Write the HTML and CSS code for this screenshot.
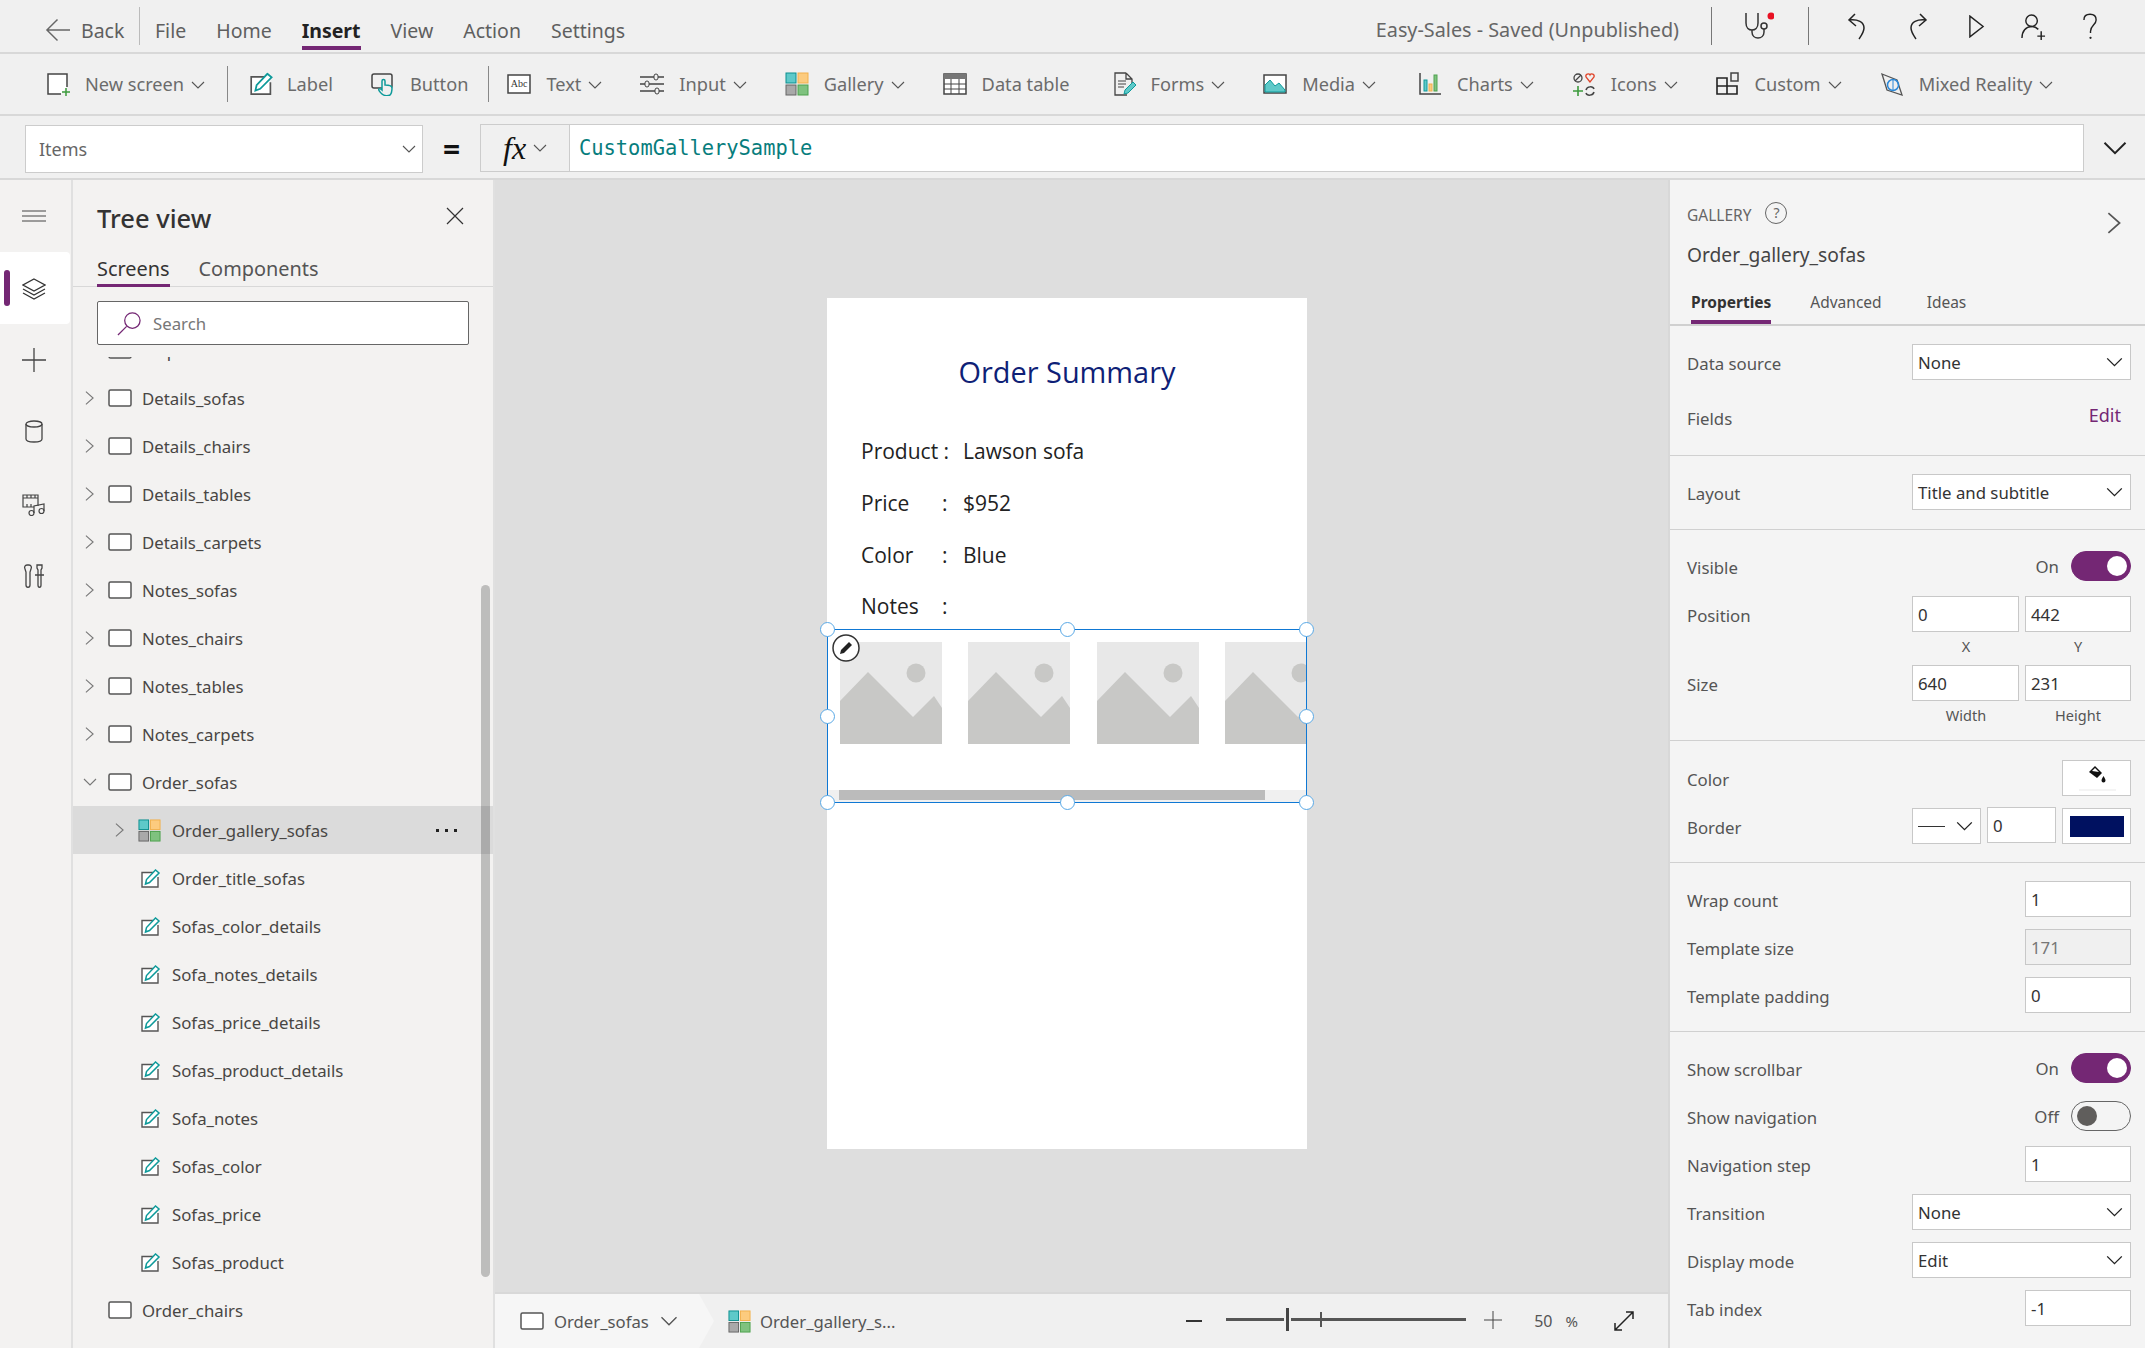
FILE: index.html
```html
<!DOCTYPE html>
<html>

<head>
    <title>Easy-Sales - Power Apps Studio</title>
    <link rel="stylesheet" href="styles.css">
</head>

<body>
    <svg class="defs" width="0" height="0">
        <defs>
            <symbol id="i-gallery" viewBox="0 0 24 24">
                <rect x="1" y="1" width="10" height="10" fill="#5ec9c9" stroke="#0d8f8f" />
                <rect x="13" y="1" width="10" height="10" fill="#fccb7e" stroke="#f2b04c" />
                <rect x="1" y="13" width="10" height="10" fill="#a9a9a9" stroke="#666" />
                <rect x="13" y="13" width="10" height="10" fill="#7fc27f" stroke="#4ea24e" />
            </symbol>
            <symbol id="i-screen" viewBox="0 0 24 18">
                <rect x="1" y="1" width="22" height="16" rx="1.5" fill="#fff" stroke="#555" stroke-width="1.5" />
            </symbol>
            <symbol id="i-label" viewBox="0 0 20 19">
                <path d="M12 3.500H1v14.500h16V8" fill="#fff" stroke="#555" stroke-width="1.400" />
                <path d="M4.500 15l1-4.500 9-9.500 3.500 3-9.500 9.500z" fill="#fff" stroke="#0e9a9a" stroke-width="1.500" />
            </symbol>
            <symbol id="i-chev" viewBox="0 0 14 8">
                <path d="M1 1l6 6 6-6" fill="none" stroke="currentColor" stroke-width="1.100" />
            </symbol>
            <symbol id="i-chev-right" viewBox="0 0 10 16">
                <path d="M1 1l8 7-8 7" fill="none" stroke="currentColor" stroke-width="1.200" />
            </symbol>
            <symbol id="i-image" viewBox="0 0 102 102">
                <rect width="102" height="102" fill="#e8e8e8" />
                <circle cx="76" cy="31" r="9.500" fill="#c8c8c6" />
                <path d="M0 59L28 30l45 45 21-21 8 12v36H0z" fill="#c8c8c6" />
            </symbol>
        </defs>
    </svg>

    <div class="app">
        <header class="menubar">
            <a class="back">
                <svg class="back-icon" viewBox="0 0 26 24">
                    <path d="M13 1L2 12l11 11M2 12h24" fill="none" stroke="#666" stroke-width="1.500" />
                </svg>
                Back
            </a>
            <span class="menu-sep"></span>
            <nav class="menu">
                <a>File</a>
                <a>Home</a>
                <a class="active">Insert</a>
                <a>View</a>
                <a>Action</a>
                <a>Settings</a>
            </nav>
            <span class="app-name">Easy-Sales - Saved (Unpublished)</span>
            <span class="tool-sep first"></span>
            <svg class="tool stetho" viewBox="0 0 30 30">
                <path d="M2 2v10c0 5 3 7 6 7s6-2 6-7V2M8 19v2c0 4 3 6 6 6s6-2 6-6v-3" fill="none" stroke="#333" stroke-width="1.500" />
                <circle cx="20" cy="15" r="3" fill="none" stroke="#333" stroke-width="1.500" />
                <circle cx="27" cy="5" r="3.500" fill="#e81123" />
            </svg>
            <span class="tool-sep"></span>
            <svg class="tool undo" viewBox="0 0 22 27">
                <path d="M9 1L3 7l7 6M3 7c9-1 15 2 15 8 0 4-3 8-5 11" fill="none" stroke="#222" stroke-width="1.500" />
            </svg>
            <svg class="tool redo" viewBox="0 0 22 27">
                <path d="M13 1l6 6-7 6M19 7C10 6 4 9 4 15c0 4 3 8 5 11" fill="none" stroke="#222" stroke-width="1.500" />
            </svg>
            <svg class="tool play" viewBox="0 0 18 24">
                <path d="M2 1l14 11L2 23z" fill="none" stroke="#222" stroke-width="1.500" />
            </svg>
            <svg class="tool person" viewBox="0 0 26 28">
                <circle cx="11" cy="8" r="6" fill="none" stroke="#222" stroke-width="1.500" />
                <path d="M1 26c0-7 4-12 10-12 3 0 5 1 7 3M21 19v9M17 24h8" fill="none" stroke="#222" stroke-width="1.500" />
            </svg>
            <svg class="tool help" viewBox="0 0 16 28">
                <path d="M1 7c0-4 3-6 6.500-6S14 3 14 7c0 5-6 6-6 12v2" fill="none" stroke="#222" stroke-width="1.500" />
                <circle cx="8" cy="26" r="1.200" fill="#222" />
            </svg>
        </header>

        <div class="toolbar">
            <div class="tb-item">
                <svg class="tb-icon" viewBox="0 0 24 24">
                    <path d="M15 22H2V2h19v13" fill="#fff" stroke="#444" stroke-width="1.500" />
                    <path d="M20 16v8M16 20h8" stroke="#3d9b3d" stroke-width="1.500" />
                </svg>
                <span>New screen</span>
                <svg class="chev"><use href="#i-chev" /></svg>
            </div>
            <span class="tb-sep"></span>
            <div class="tb-item label-item">
                <svg class="tb-icon" viewBox="0 0 20 19"><use href="#i-label" /></svg>
                <span>Label</span>
            </div>
            <div class="tb-item">
                <svg class="tb-icon" viewBox="0 0 24 24">
                    <rect x="1" y="2" width="20" height="14" rx="2" fill="none" stroke="#444" stroke-width="1.500" />
                    <path d="M11 22c-2-2-4-4-3-5 1-1 2 0 3 1V9c0-2 3-2 3 0v4c3 0 7 0 7 3 0 3 0 5-2 7-2 1-6 1-8-1z" fill="#f0f0f0" stroke="#0e9a9a" stroke-width="1.500" />
                </svg>
                <span>Button</span>
            </div>
            <span class="tb-sep tight"></span>
            <div class="tb-item">
                <svg class="tb-icon" viewBox="0 0 24 24">
                    <rect x="1" y="3" width="22" height="18" fill="#fff" stroke="#444" stroke-width="1.500" />
                    <text x="12" y="15" text-anchor="middle" class="abc">Abc</text>
                </svg>
                <span>Text</span>
                <svg class="chev"><use href="#i-chev" /></svg>
            </div>
            <div class="tb-item">
                <svg class="tb-icon" viewBox="0 0 24 24">
                    <path d="M0 5h24M0 12h24M0 19h24" stroke="#444" stroke-width="1.300" />
                    <rect x="14" y="2" width="4" height="6" rx="2" fill="#f0f0f0" stroke="#444" />
                    <rect x="5" y="9" width="4" height="6" rx="2" fill="#f0f0f0" stroke="#444" />
                    <rect x="15" y="16" width="4" height="6" rx="2" fill="#f0f0f0" stroke="#444" />
                </svg>
                <span>Input</span>
                <svg class="chev"><use href="#i-chev" /></svg>
            </div>
            <div class="tb-item">
                <svg class="tb-icon"><use href="#i-gallery" /></svg>
                <span>Gallery</span>
                <svg class="chev"><use href="#i-chev" /></svg>
            </div>
            <div class="tb-item">
                <svg class="tb-icon" viewBox="0 0 24 24">
                    <rect x="1" y="2" width="22" height="20" fill="#fff" stroke="#444" stroke-width="1.500" />
                    <rect x="1" y="2" width="22" height="5" fill="#777" />
                    <path d="M1 12h22M1 17h22M8 7v15M16 7v15" stroke="#444" />
                </svg>
                <span>Data table</span>
            </div>
            <div class="tb-item pushed">
                <svg class="tb-icon" viewBox="0 0 24 24">
                    <path d="M14 1H3v22h12M14 1l6 6v5M14 1v6h6" fill="none" stroke="#444" stroke-width="1.300" />
                    <path d="M6 9h8M6 12h8M6 15h6" stroke="#444" />
                    <path d="M12 22l1-4 8-8 3 3-8 8z" fill="#5ec9c9" stroke="#0e9a9a" />
                </svg>
                <span>Forms</span>
                <svg class="chev"><use href="#i-chev" /></svg>
            </div>
            <div class="tb-item">
                <svg class="tb-icon" viewBox="0 0 24 24">
                    <rect x="1" y="3" width="22" height="18" fill="#fff" stroke="#444" stroke-width="1.500" />
                    <path d="M2 20v-7l5-5 5 6 4-3 6 7v2z" fill="#5ec9c9" stroke="#0e9a9a" />
                </svg>
                <span>Media</span>
                <svg class="chev"><use href="#i-chev" /></svg>
            </div>
            <div class="tb-item pushed">
                <svg class="tb-icon" viewBox="0 0 24 24">
                    <path d="M2 1v21h21" fill="none" stroke="#444" stroke-width="1.500" />
                    <rect x="6" y="8" width="3" height="11" fill="#5ec9c9" stroke="#0e9a9a" />
                    <rect x="11" y="12" width="3" height="7" fill="#fccb7e" stroke="#f2b04c" />
                    <rect x="16" y="3" width="3" height="16" fill="#7fc27f" stroke="#4ea24e" />
                </svg>
                <span>Charts</span>
                <svg class="chev"><use href="#i-chev" /></svg>
            </div>
            <div class="tb-item">
                <svg class="tb-icon" viewBox="0 0 24 24">
                    <circle cx="6" cy="6" r="4" fill="none" stroke="#444" stroke-width="1.300" />
                    <path d="M3 9l6-6" stroke="#444" stroke-width="1.300" />
                    <path d="M18 10l-4-5c-1-3 3-4 4-2 1-2 5-1 4 2z" fill="none" stroke="#e0452b" stroke-width="1.300" />
                    <path d="M6 14v10M1 19h10" stroke="#3d9b3d" stroke-width="1.600" />
                    <path d="M14 18c1-4 7-4 8-1M22 20c-1 4-7 4-8 1" fill="none" stroke="#444" stroke-width="1.500" />
                </svg>
                <span>Icons</span>
                <svg class="chev"><use href="#i-chev" /></svg>
            </div>
            <div class="tb-item">
                <svg class="tb-icon" viewBox="0 0 24 24">
                    <path d="M1 6h10v16H1zM1 14h20v8H11" fill="none" stroke="#222" stroke-width="1.600" />
                    <rect x="15" y="1" width="7" height="8" fill="none" stroke="#444" stroke-width="1.500" />
                </svg>
                <span>Custom</span>
                <svg class="chev"><use href="#i-chev" /></svg>
            </div>
            <div class="tb-item">
                <svg class="tb-icon" viewBox="0 0 24 24">
                    <path d="M2 2l15 6 5 15-15-5z" fill="none" stroke="#555" stroke-width="1.300" />
                    <circle cx="13" cy="13" r="5.500" fill="none" stroke="#2b88d8" stroke-width="1.500" />
                    <path d="M13 8v10" stroke="#2b88d8" />
                </svg>
                <span>Mixed Reality</span>
                <svg class="chev"><use href="#i-chev" /></svg>
            </div>
        </div>

        <div class="formula">
            <div class="prop-select">
                <span>Items</span>
                <svg class="chev"><use href="#i-chev" /></svg>
            </div>
            <span class="equals">=</span>
            <div class="fx">
                <i>fx</i>
                <svg class="chev"><use href="#i-chev" /></svg>
            </div>
            <div class="formula-input">CustomGallerySample</div>
            <svg class="formula-expand"><use href="#i-chev" /></svg>
        </div>

        <div class="workspace">
            <aside class="rail">
                <div class="rail-item">
                    <svg class="rail-icon" viewBox="0 0 24 24">
                        <path d="M0 7h24M0 12h24M0 17h24" stroke="#444" />
                    </svg>
                </div>
                <div class="rail-item active">
                    <svg class="rail-icon" viewBox="0 0 24 24">
                        <path d="M12 3l11 6-11 6L1 9z" fill="#fff" stroke="#333" stroke-width="1.300" />
                        <path d="M1 13l11 6 11-6M1 17l11 6 11-6" fill="none" stroke="#333" stroke-width="1.300" />
                    </svg>
                </div>
                <div class="rail-item">
                    <svg class="rail-icon" viewBox="0 0 24 24">
                        <path d="M12 0v24M0 12h24" stroke="#444" stroke-width="1.300" />
                    </svg>
                </div>
                <div class="rail-item">
                    <svg class="rail-icon" viewBox="0 0 24 24">
                        <ellipse cx="12" cy="4" rx="8" ry="3" fill="none" stroke="#444" stroke-width="1.300" />
                        <path d="M4 4v15c0 4 16 4 16 0V4" fill="none" stroke="#444" stroke-width="1.300" />
                    </svg>
                </div>
                <div class="rail-item">
                    <svg class="rail-icon" viewBox="0 0 24 24">
                        <path d="M16 14V3H1v12h11M1 6h15M5 3v3M9 3v3M13 3v3M5 12v3M9 12v3" fill="none" stroke="#444" stroke-width="1.200" />
                        <path d="M12 21v-7l10-2v7" fill="none" stroke="#444" stroke-width="1.200" />
                        <circle cx="9.500" cy="21" r="2.500" fill="none" stroke="#444" stroke-width="1.200" />
                        <circle cx="19.500" cy="19" r="2.500" fill="none" stroke="#444" stroke-width="1.200" />
                    </svg>
                </div>
                <div class="rail-item">
                    <svg class="rail-icon" viewBox="0 0 24 24">
                        <path d="M5 1c-2 0-3 2-2 4l1 3v13c0 3 4 3 4 0V8l1-3c1-2 0-4-2-4z" fill="none" stroke="#444" stroke-width="1.300" />
                        <path d="M15 4V1h5v3l-1 2v15c0 3-3 3-3 0V6zM13 11h9" fill="none" stroke="#444" stroke-width="1.300" />
                    </svg>
                </div>
            </aside>

            <section class="tree-panel">
                <div class="tree-head">
                    <h2>Tree view</h2>
                    <svg class="tree-close" viewBox="0 0 18 18">
                        <path d="M1 1l16 16M17 1L1 17" stroke="#333" stroke-width="1.200" />
                    </svg>
                </div>
                <div class="tree-tabs">
                    <a class="active">Screens</a>
                    <a>Components</a>
                </div>
                <div class="tree-search">
                    <svg class="search-icon" viewBox="0 0 26 26">
                        <circle cx="16" cy="10" r="8" fill="none" stroke="#742774" stroke-width="1.300" />
                        <path d="M10 16L1 25" stroke="#742774" stroke-width="1.300" />
                    </svg>
                    <span>Search</span>
                </div>
                <div class="tree-list">
                    <div class="tree-inner">
                        <div class="tree-row screen">
                            <span class="tree-chev"></span>
                            <svg class="screen-icon"><use href="#i-screen" /></svg>
                            <span>Map</span>
                        </div>
                        <div class="tree-row screen">
                            <svg class="tree-chev"><use href="#i-chev-right" /></svg>
                            <svg class="screen-icon"><use href="#i-screen" /></svg>
                            <span>Details_sofas</span>
                        </div>
                        <div class="tree-row screen">
                            <svg class="tree-chev"><use href="#i-chev-right" /></svg>
                            <svg class="screen-icon"><use href="#i-screen" /></svg>
                            <span>Details_chairs</span>
                        </div>
                        <div class="tree-row screen">
                            <svg class="tree-chev"><use href="#i-chev-right" /></svg>
                            <svg class="screen-icon"><use href="#i-screen" /></svg>
                            <span>Details_tables</span>
                        </div>
                        <div class="tree-row screen">
                            <svg class="tree-chev"><use href="#i-chev-right" /></svg>
                            <svg class="screen-icon"><use href="#i-screen" /></svg>
                            <span>Details_carpets</span>
                        </div>
                        <div class="tree-row screen">
                            <svg class="tree-chev"><use href="#i-chev-right" /></svg>
                            <svg class="screen-icon"><use href="#i-screen" /></svg>
                            <span>Notes_sofas</span>
                        </div>
                        <div class="tree-row screen">
                            <svg class="tree-chev"><use href="#i-chev-right" /></svg>
                            <svg class="screen-icon"><use href="#i-screen" /></svg>
                            <span>Notes_chairs</span>
                        </div>
                        <div class="tree-row screen">
                            <svg class="tree-chev"><use href="#i-chev-right" /></svg>
                            <svg class="screen-icon"><use href="#i-screen" /></svg>
                            <span>Notes_tables</span>
                        </div>
                        <div class="tree-row screen">
                            <svg class="tree-chev"><use href="#i-chev-right" /></svg>
                            <svg class="screen-icon"><use href="#i-screen" /></svg>
                            <span>Notes_carpets</span>
                        </div>
                        <div class="tree-row screen">
                            <svg class="tree-chev open"><use href="#i-chev" /></svg>
                            <svg class="screen-icon"><use href="#i-screen" /></svg>
                            <span>Order_sofas</span>
                        </div>
                        <div class="tree-row child selected">
                            <svg class="tree-chev"><use href="#i-chev-right" /></svg>
                            <svg class="gallery-icon"><use href="#i-gallery" /></svg>
                            <span>Order_gallery_sofas</span>
                            <span class="more"><b></b><b></b><b></b></span>
                        </div>
                        <div class="tree-row child leaf">
                            <svg class="label-icon"><use href="#i-label" /></svg>
                            <span>Order_title_sofas</span>
                        </div>
                        <div class="tree-row child leaf">
                            <svg class="label-icon"><use href="#i-label" /></svg>
                            <span>Sofas_color_details</span>
                        </div>
                        <div class="tree-row child leaf">
                            <svg class="label-icon"><use href="#i-label" /></svg>
                            <span>Sofa_notes_details</span>
                        </div>
                        <div class="tree-row child leaf">
                            <svg class="label-icon"><use href="#i-label" /></svg>
                            <span>Sofas_price_details</span>
                        </div>
                        <div class="tree-row child leaf">
                            <svg class="label-icon"><use href="#i-label" /></svg>
                            <span>Sofas_product_details</span>
                        </div>
                        <div class="tree-row child leaf">
                            <svg class="label-icon"><use href="#i-label" /></svg>
                            <span>Sofa_notes</span>
                        </div>
                        <div class="tree-row child leaf">
                            <svg class="label-icon"><use href="#i-label" /></svg>
                            <span>Sofas_color</span>
                        </div>
                        <div class="tree-row child leaf">
                            <svg class="label-icon"><use href="#i-label" /></svg>
                            <span>Sofas_price</span>
                        </div>
                        <div class="tree-row child leaf">
                            <svg class="label-icon"><use href="#i-label" /></svg>
                            <span>Sofas_product</span>
                        </div>
                        <div class="tree-row screen">
                            <span class="tree-chev"></span>
                            <svg class="screen-icon"><use href="#i-screen" /></svg>
                            <span>Order_chairs</span>
                        </div>
                    </div>
                    <div class="tree-scroll"></div>
                </div>
            </section>

            <main class="center">
                <div class="canvas">
                    <div class="screen-page">
                        <h1 class="order-title">Order Summary</h1>
                        <div class="detail first"><span>Product :</span><span></span><span>Lawson sofa</span></div>
                        <div class="detail"><span>Price</span><span>:</span><span>$952</span></div>
                        <div class="detail"><span>Color</span><span>:</span><span>Blue</span></div>
                        <div class="detail notes"><span>Notes</span><span>:</span><span></span></div>
                        <div class="gal">
                            <div class="gal-items">
                                <svg class="placeholder" viewBox="0 0 102 102"><use href="#i-image" /></svg>
                                <svg class="placeholder" viewBox="0 0 102 102"><use href="#i-image" /></svg>
                                <svg class="placeholder" viewBox="0 0 102 102"><use href="#i-image" /></svg>
                                <svg class="placeholder" viewBox="0 0 102 102"><use href="#i-image" /></svg>
                            </div>
                            <div class="gal-scroll"><div class="gal-thumb"></div></div>
                            <span class="gal-edit">
                                <svg viewBox="0 0 28 28">
                                    <circle cx="14" cy="14" r="13" fill="#fff" stroke="#333" stroke-width="1.500" />
                                    <path d="M8 20l1-4 8-8 3 3-8 8z" fill="#222" />
                                </svg>
                            </span>
                            <span class="handle tl"></span>
                            <span class="handle tc"></span>
                            <span class="handle tr"></span>
                            <span class="handle ml"></span>
                            <span class="handle mr"></span>
                            <span class="handle bl"></span>
                            <span class="handle bc"></span>
                            <span class="handle br"></span>
                        </div>
                    </div>
                </div>
                <footer class="statusbar">
                    <div class="crumb">
                        <svg class="crumb-screen"><use href="#i-screen" /></svg>
                        <span>Order_sofas</span>
                        <svg class="chev"><use href="#i-chev" /></svg>
                    </div>
                    <div class="crumb-gallery">
                        <svg class="crumb-gal-icon"><use href="#i-gallery" /></svg>
                        <span>Order_gallery_s...</span>
                    </div>
                    <div class="zoom">
                        <span class="zoom-minus"></span>
                        <div class="slider"><span class="slider-thumb"></span><span class="slider-tick"></span></div>
                        <svg class="zoom-plus" viewBox="0 0 18 18"><path d="M9 0v18M0 9h18" stroke="#444" /></svg>
                        <span class="zoom-val">50</span>
                        <span class="zoom-pct">%</span>
                        <svg class="zoom-fit" viewBox="0 0 22 22">
                            <path d="M2 20L20 2M13 2h7v7M2 13v7h7" fill="none" stroke="#222" stroke-width="1.500" />
                        </svg>
                    </div>
                </footer>
            </main>

            <aside class="props">
                <div class="props-head">
                    <div class="props-type">
                        <span>GALLERY</span>
                        <span class="help-dot">?</span>
                    </div>
                    <svg class="props-collapse"><use href="#i-chev-right" /></svg>
                    <div class="props-name">Order_gallery_sofas</div>
                    <div class="props-tabs">
                        <a class="active">Properties</a>
                        <a>Advanced</a>
                        <a>Ideas</a>
                    </div>
                </div>

                <div class="prop-section s-data">
                    <div class="prop-row">
                        <label>Data source</label>
                        <div class="select wide"><span>None</span><svg class="chev"><use href="#i-chev" /></svg></div>
                    </div>
                    <div class="prop-row">
                        <label>Fields</label>
                        <a class="edit-link">Edit</a>
                    </div>
                </div>

                <div class="prop-section s-layout">
                    <div class="prop-row">
                        <label>Layout</label>
                        <div class="select wide"><span>Title and subtitle</span><svg class="chev"><use href="#i-chev" /></svg></div>
                    </div>
                </div>

                <div class="prop-section s-geometry">
                    <div class="prop-row">
                        <label>Visible</label>
                        <div class="switch-wrap"><span>On</span><span class="switch on"></span></div>
                    </div>
                    <div class="prop-row">
                        <label>Position</label>
                        <div class="pair"><div class="field">0</div><div class="field">442</div></div>
                    </div>
                    <div class="pair-caption"><span>X</span><span>Y</span></div>
                    <div class="prop-row size-row">
                        <label>Size</label>
                        <div class="pair"><div class="field">640</div><div class="field">231</div></div>
                    </div>
                    <div class="pair-caption"><span>Width</span><span>Height</span></div>
                </div>

                <div class="prop-section s-color">
                    <div class="prop-row">
                        <label>Color</label>
                        <div class="swatch">
                            <svg class="bucket" viewBox="0 0 20 20">
                                <path d="M8 1l7 7-5 5-8-6z" fill="#111" />
                                <path d="M5 6l3-3 4 4z" fill="#fff" />
                                <path d="M16.500 11c-1 2-2 3-2 4.500a2 2 0 0 0 4 0c0-1.500-1-2.500-2-4.500z" fill="#111" />
                            </svg>
                            <span class="bucket-bar"></span>
                        </div>
                    </div>
                    <div class="prop-row">
                        <label>Border</label>
                        <div class="border-controls">
                            <div class="select line"><span class="line-sample"></span><svg class="chev"><use href="#i-chev" /></svg></div>
                            <div class="field mini">0</div>
                            <div class="swatch navy"><span></span></div>
                        </div>
                    </div>
                </div>

                <div class="prop-section s-wrap">
                    <div class="prop-row">
                        <label>Wrap count</label>
                        <div class="field narrow">1</div>
                    </div>
                    <div class="prop-row">
                        <label>Template size</label>
                        <div class="field narrow disabled">171</div>
                    </div>
                    <div class="prop-row">
                        <label>Template padding</label>
                        <div class="field narrow">0</div>
                    </div>
                </div>

                <div class="prop-section s-misc">
                    <div class="prop-row">
                        <label>Show scrollbar</label>
                        <div class="switch-wrap"><span>On</span><span class="switch on"></span></div>
                    </div>
                    <div class="prop-row">
                        <label>Show navigation</label>
                        <div class="switch-wrap"><span>Off</span><span class="switch"></span></div>
                    </div>
                    <div class="prop-row">
                        <label>Navigation step</label>
                        <div class="field narrow">1</div>
                    </div>
                    <div class="prop-row">
                        <label>Transition</label>
                        <div class="select wide"><span>None</span><svg class="chev"><use href="#i-chev" /></svg></div>
                    </div>
                    <div class="prop-row">
                        <label>Display mode</label>
                        <div class="select wide"><span>Edit</span><svg class="chev"><use href="#i-chev" /></svg></div>
                    </div>
                    <div class="prop-row">
                        <label>Tab index</label>
                        <div class="field narrow">-1</div>
                    </div>
                </div>
            </aside>
        </div>
    </div>
</body>

</html>
```

FILE: styles.css
```css
* {
    box-sizing: border-box;
}

html,
body {
    margin: 0;
    height: 100%;
    overflow: hidden;
}

body {
    font-family: "Noto Sans", "Open Sans", sans-serif;
    color: #444;
    background-color: #f0f0f0;
}

.defs {
    position: absolute;
}

.app {
    display: flex;
    flex-direction: column;
    height: 1348px;
}

.chev {
    width: 14px;
    height: 8px;
    color: #555;
    flex: none;
}

/* top menu */
.menubar {
    display: flex;
    align-items: center;
    height: 54px;
    flex: none;
    padding: 0 47px 0 45px;
    border-bottom: 2px solid #d8d8d8;
    font-size: 19.500px;
    color: #5f5f5f;
}

.back {
    display: flex;
    align-items: center;
    gap: 11px;
    width: 94px;
    padding-top: 8px;
}

.back-icon {
    width: 25px;
    height: 24px;
}

.menu-sep {
    width: 1px;
    height: 38px;
    background-color: #bbb;
}

.menu {
    display: flex;
    gap: 30px;
    margin-left: 15px;
    align-self: stretch;
}

.menu a {
    display: flex;
    align-items: center;
    height: 50px;
    padding-top: 14px;
    border-bottom: 4px solid transparent;
}

.menu a.active {
    font-weight: 700;
    color: #222;
    border-bottom-color: #742774;
}

.app-name {
    margin-left: auto;
    margin-right: 32px;
    padding-top: 6px;
    font-size: 19.800px;
    color: #666;
}

.tool-sep {
    width: 1px;
    height: 38px;
    background-color: #777;
    margin-right: 35px;
}

.tool-sep.first {
    margin-right: 32px;
}

.tool {
    flex: none;
}

.stetho {
    width: 30px;
    height: 30px;
    margin-right: 34px;
}

.undo {
    width: 22px;
    height: 27px;
    margin-left: 2px;
    margin-right: 39px;
}

.redo {
    width: 22px;
    height: 27px;
    margin-right: 39px;
}

.play {
    width: 17px;
    height: 23px;
    margin-right: 36px;
}

.person {
    width: 25px;
    height: 27px;
    margin-right: 37px;
}

.help {
    width: 15px;
    height: 27px;
}

/* ribbon */
.toolbar {
    display: flex;
    align-items: center;
    gap: 38px;
    height: 62px;
    flex: none;
    padding-left: 46px;
    border-bottom: 2px solid #d8d8d8;
    font-size: 18.200px;
    color: #6b6b6b;
    white-space: nowrap;
}

.tb-item {
    display: flex;
    align-items: center;
}

.tb-item.pushed {
    margin-left: 4px;
}

.tb-icon {
    width: 24px;
    height: 24px;
    margin-right: 15px;
    flex: none;
}

.label-item .tb-icon {
    margin-right: 13px;
}

.tb-item .chev {
    margin-left: 7px;
    margin-top: 2px;
}

.abc {
    font-family: "Liberation Serif", serif;
    font-size: 10px;
    fill: #333;
}

.tb-sep {
    width: 1px;
    height: 36px;
    margin: 0 -16px;
    background-color: #888;
}

.tb-sep.tight {
    margin: 0 -20px 0 -18px;
}

/* formula bar */
.formula {
    display: flex;
    align-items: center;
    height: 64px;
    flex: none;
    padding-left: 25px;
}

.prop-select {
    display: flex;
    align-items: center;
    justify-content: space-between;
    width: 398px;
    height: 48px;
    margin-top: 2px;
    padding: 0 6px 0 13px;
    background-color: #fff;
    border: 1px solid #ccc;
    font-size: 18px;
    color: #666;
}

.equals {
    width: 57px;
    text-align: center;
    font-size: 30px;
    font-weight: 700;
    color: #111;
}

.fx {
    display: flex;
    align-items: center;
    gap: 7px;
    width: 89px;
    height: 48px;
    padding-left: 22px;
    border: 1px solid #ccc;
    border-right: none;
}

.fx i {
    font-family: "Liberation Serif", serif;
    font-size: 32px;
    color: #111;
}

.formula-input {
    width: 1515px;
    height: 48px;
    padding-left: 9px;
    line-height: 46px;
    background-color: #fff;
    border: 1px solid #ccc;
    font-family: "DejaVu Sans Mono", monospace;
    font-size: 20.400px;
    color: #077d7d;
}

.formula-expand {
    width: 28px;
    height: 14px;
    margin-left: 17px;
    color: #222;
}

/* main area */
.workspace {
    display: flex;
    flex: 1;
    min-height: 0;
    border-top: 2px solid #d8d8d8;
    margin-top: -2px;
}

.rail {
    width: 73px;
    flex: none;
    background-color: #f3f2f1;
    border-right: 2px solid #e0e0e0;
}

.rail-item {
    display: flex;
    align-items: center;
    justify-content: center;
    height: 72px;
    width: 70px;
    position: relative;
}

.rail-item.active {
    background-color: #fff;
    border-radius: 0 4px 4px 0;
}

.rail-item.active::before {
    content: "";
    position: absolute;
    left: 4px;
    top: 18px;
    width: 6px;
    height: 36px;
    border-radius: 3px;
    background-color: #742774;
}

.rail-icon {
    width: 24px;
    height: 24px;
    margin-left: -3px;
}

.tree-panel {
    display: flex;
    flex-direction: column;
    width: 422px;
    flex: none;
    background-color: #f3f2f1;
    border-right: 2px solid #e0e0e0;
}

.tree-head {
    display: flex;
    align-items: center;
    justify-content: space-between;
    height: 72px;
    padding: 4px 29px 0 24px;
}

.tree-head h2 {
    margin: 0;
    font-size: 25.500px;
    font-weight: 500;
    color: #333;
}

.tree-close {
    width: 18px;
    height: 18px;
    margin-bottom: 4px;
}

.tree-tabs {
    display: flex;
    gap: 29px;
    height: 35px;
    padding-left: 24px;
    border-bottom: 1px solid #d8d8d8;
    font-size: 19.900px;
    color: #555;
}

.tree-tabs a {
    height: 35px;
    line-height: 33px;
}

.tree-tabs a.active {
    color: #333;
    border-bottom: 3px solid #742774;
}

.tree-search {
    display: flex;
    align-items: center;
    width: 372px;
    height: 44px;
    margin: 14px 0 12px 24px;
    padding-left: 19px;
    background-color: #fff;
    border: 1px solid #666;
    border-radius: 2px;
    font-size: 16.800px;
    color: #777;
}

.search-icon {
    width: 25px;
    height: 25px;
    margin-right: 11px;
}

.tree-list {
    flex: 1;
    min-height: 0;
    overflow: hidden;
    position: relative;
}

.tree-inner {
    margin-top: -31px;
}

.tree-row {
    display: flex;
    align-items: center;
    height: 48px;
    font-size: 16.800px;
    color: #484644;
    padding-left: 12px;
}

.tree-row.child {
    padding-left: 42px;
}

.tree-row.leaf {
    padding-left: 68px;
}

.tree-row.selected {
    background-color: #dbdbdb;
}

.tree-chev {
    width: 9px;
    height: 16px;
    margin-right: 14px;
    color: #777;
    flex: none;
}

.tree-chev.open {
    width: 14px;
    height: 8px;
    margin-left: -2px;
    margin-right: 11px;
}

.screen-icon {
    width: 24px;
    height: 18px;
    margin-right: 10px;
    flex: none;
}

.gallery-icon {
    width: 23px;
    height: 23px;
    margin-right: 11px;
}

.label-icon {
    width: 20px;
    height: 19px;
    margin-right: 11px;
}

.more {
    display: flex;
    gap: 6px;
    margin-left: auto;
    margin-right: 36px;
}

.more b {
    width: 3px;
    height: 3px;
    background-color: #222;
}

.tree-scroll {
    position: absolute;
    left: 408px;
    top: 228px;
    width: 9px;
    height: 692px;
    border-radius: 5px;
    background-color: rgba(0, 0, 0, 0.22);
}

/* canvas */
.center {
    display: flex;
    flex-direction: column;
    flex: 1;
    min-width: 0;
}

.canvas {
    flex: 1;
    padding: 118px 0 0 332px;
    background-color: #dedede;
}

.screen-page {
    width: 480px;
    height: 851px;
    padding-top: 55px;
    background-color: #fff;
    font-family: "Open Sans", sans-serif;
}

.order-title {
    margin: 0;
    text-align: center;
    height: 38px;
    line-height: 38px;
    font-size: 28.900px;
    font-weight: 400;
    color: #0f1f77;
}

.detail {
    display: grid;
    grid-template-columns: 81px 21px auto;
    height: 52px;
    padding-left: 34px;
    line-height: 52px;
    font-size: 21px;
    color: #222;
    white-space: nowrap;
}

.detail.first {
    margin-top: 34px;
}

.detail.notes {
    height: 48px;
    line-height: 50px;
}

.gal {
    position: relative;
    height: 174px;
    border: 1px solid #0f78d4;
}

.gal-items {
    display: flex;
    gap: 26.300px;
    height: 160px;
    padding: 12px 0 0 12px;
    overflow: hidden;
}

.placeholder {
    width: 102px;
    height: 102px;
    flex: none;
}

.gal-scroll {
    height: 12px;
    padding-left: 11px;
    background-color: #f0f0f0;
}

.gal-thumb {
    width: 426px;
    height: 10px;
    background-color: #bbb;
}

.gal-edit {
    position: absolute;
    left: 4px;
    top: 4px;
    width: 28px;
    height: 28px;
}

.gal-edit svg {
    display: block;
}

.handle {
    position: absolute;
    width: 15px;
    height: 15px;
    background-color: #fff;
    border: 1.500px solid #5aa9e6;
    border-radius: 50%;
}

.tl,
.tc,
.tr {
    top: -8px;
}

.ml,
.mr {
    top: 79px;
}

.bl,
.bc,
.br {
    bottom: -8px;
}

.tl,
.ml,
.bl {
    left: -8px;
}

.tc,
.bc {
    left: 232px;
}

.tr,
.mr,
.br {
    right: -8px;
}

/* status bar */
.statusbar {
    display: flex;
    align-items: center;
    height: 56px;
    flex: none;
    background-color: #f0f0f0;
    border-top: 2px solid #d8d8d8;
    font-size: 16.700px;
    color: #555;
}

.crumb {
    display: flex;
    align-items: center;
    width: 219px;
    height: 100%;
    padding-left: 25px;
    background-color: #f6f6f6;
    clip-path: polygon(0 0, 204px 0, 219px 50%, 204px 100%, 0 100%);
}

.crumb-screen {
    width: 24px;
    height: 18px;
    margin-right: 10px;
}

.crumb .chev {
    margin-left: 11px;
    width: 18px;
    height: 10px;
}

.crumb-gallery {
    display: flex;
    align-items: center;
    margin-left: 14px;
}

.crumb-gal-icon {
    width: 23px;
    height: 23px;
    margin-right: 9px;
}

.zoom {
    display: flex;
    align-items: center;
    margin-left: auto;
    padding-right: 33px;
}

.zoom-minus {
    width: 16px;
    height: 1.500px;
    background-color: #333;
    margin-right: 24px;
}

.slider {
    position: relative;
    width: 240px;
    height: 3px;
    margin-top: -4px;
    margin-right: 18px;
    background-color: #555;
}

.slider-thumb {
    position: absolute;
    left: 60px;
    top: -10px;
    width: 3px;
    height: 23px;
    background-color: #444;
    outline: 2px solid #f0f0f0;
}

.slider-tick {
    position: absolute;
    left: 94px;
    top: -6px;
    width: 1.500px;
    height: 15px;
    background-color: #555;
}

.zoom-plus {
    width: 18px;
    height: 18px;
    margin-top: -2px;
    margin-right: 32px;
}

.zoom-val {
    margin-right: 13px;
    font-size: 16px;
}

.zoom-pct {
    margin-right: 35px;
    font-size: 15px;
}

.zoom-fit {
    width: 22px;
    height: 22px;
}

/* properties */
.props {
    width: 477px;
    flex: none;
    background-color: #f4f4f4;
    border-left: 2px solid #d8d8d8;
    font-size: 16.800px;
    color: #555;
}

.props-head {
    position: relative;
    height: 146px;
    padding: 21px 0 0 17px;
    border-bottom: 2px solid #d0d0d0;
}

.props-type {
    display: flex;
    align-items: center;
    gap: 14px;
    height: 28px;
    font-size: 15.500px;
    color: #666;
}

.help-dot {
    width: 22px;
    height: 22px;
    margin-top: -4px;
    border: 1.500px solid #666;
    border-radius: 50%;
    text-align: center;
    line-height: 19px;
    font-size: 14px;
}

.props-collapse {
    position: absolute;
    right: 24px;
    top: 31px;
    width: 14px;
    height: 24px;
    color: #555;
}

.props-name {
    margin-top: 12px;
    height: 28px;
    line-height: 28px;
    font-size: 19.200px;
    color: #444;
}

.props-tabs {
    display: flex;
    gap: 39px;
    margin-top: 22px;
    padding-left: 4px;
    font-size: 15.500px;
    line-height: 22px;
    color: #555;
}

.props-tabs a:last-child {
    margin-left: 6px;
}

.props-tabs a.active {
    height: 33px;
    border-bottom: 4px solid #742774;
    font-weight: 700;
    color: #333;
}

.prop-section {
    padding-right: 14px;
    padding-left: 17px;
    border-bottom: 1px solid #d0d0d0;
}

.s-data {
    padding-top: 12px;
    height: 130px;
}

.s-data .prop-row + .prop-row {
    margin-top: 7px;
}

.s-layout {
    height: 74px;
    padding-top: 12px;
}

.s-geometry {
    height: 211px;
    padding-top: 12px;
}

.s-color {
    height: 122px;
    padding-top: 13px;
}

.s-wrap {
    height: 169px;
    padding-top: 12px;
}

.s-misc {
    padding-top: 12px;
    border-bottom: none;
}

.prop-row {
    display: flex;
    align-items: center;
    justify-content: space-between;
    height: 48px;
}

.prop-row label {
    padding-top: 2px;
}

.size-row {
    margin-top: 5px;
}

.select,
.field,
.swatch {
    display: flex;
    align-items: center;
    height: 36px;
    background-color: #fff;
    border: 1px solid #c8c8c8;
    font-size: 16.800px;
    color: #333;
}

.select {
    justify-content: space-between;
    padding: 0 7px 0 5px;
}

.select .chev {
    width: 17px;
    height: 10px;
    color: #222;
}

.select.wide {
    width: 219px;
}

.field {
    padding-left: 5px;
}

.pair {
    display: flex;
    gap: 6px;
}

.pair .field {
    width: 107px;
}

.pair .field + .field {
    width: 106px;
}

.field.narrow {
    width: 106px;
}

.field.disabled {
    background-color: #f0f0f0;
    color: #777;
}

.pair-caption {
    display: flex;
    justify-content: flex-end;
    gap: 6px;
    height: 16px;
    line-height: 16px;
    font-size: 14.500px;
    color: #555;
}

.pair-caption span {
    width: 106px;
    text-align: center;
}

.switch-wrap {
    display: flex;
    align-items: center;
    gap: 12px;
}

.switch {
    position: relative;
    width: 60px;
    height: 30px;
    border: 1px solid #666;
    border-radius: 15px;
}

.switch::after {
    content: "";
    position: absolute;
    left: 5px;
    top: 4px;
    width: 20px;
    height: 20px;
    border-radius: 50%;
    background-color: #605e5c;
}

.switch.on {
    border-color: #742774;
    background-color: #742774;
}

.switch.on::after {
    left: 35px;
    background-color: #fff;
}

.edit-link {
    margin-right: 10px;
    margin-bottom: 5px;
    font-size: 18px;
    color: #742774;
}

.swatch {
    justify-content: center;
    width: 69px;
    position: relative;
}

.bucket {
    width: 20px;
    height: 20px;
    margin-bottom: 6px;
}

.bucket-bar {
    position: absolute;
    left: 16px;
    bottom: 4px;
    width: 37px;
    height: 2px;
    background-color: #f4f4f4;
}

.border-controls {
    display: flex;
    gap: 6px;
}

.select.line {
    width: 69px;
}

.line-sample {
    width: 27px;
    height: 1px;
    background-color: #333;
}

.field.mini {
    width: 69px;
    margin-top: -1px;
}

.swatch.navy span {
    width: 54px;
    height: 21px;
    background-color: #001160;
}
```
